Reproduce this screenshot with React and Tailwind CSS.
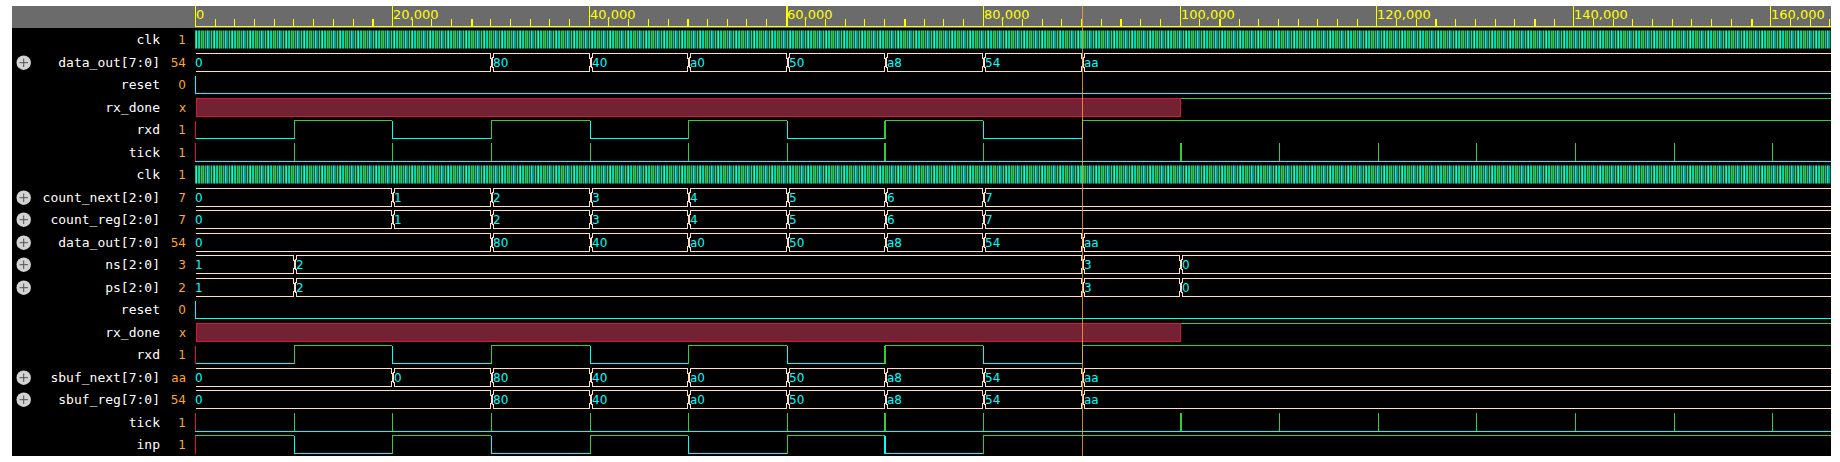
const X = [0, 99, 197, 296, 395, 493, 592, 690, 788, 887, 985, 1084, 1183, 1281, 1380, 1479, 1577];
const END = 4000;

const GREEN = '#32cd32';
const CYAN = '#00ffff';
const RED = '#dc143c';
const BUS = '#ffdfc0';

const THICK = [9, 14, 25, 30, 36, 47, 52, 63, 68, 79];
const CLOCK_COLORS = [
  '#22c860', '#00ffe8', '#064a3c', '#10c8a0', '#1fd890', '#06503c',
  '#28c850', '#209a3c', '#2fc850', '#0a5a38', '#1cc890', '#04584c',
  '#00f0d8', '#10a08c', '#109878', '#04503c', '#10e0a0', '#064838',
];

function Clock() {
  return (
    <>
      {Array.from({ length: 2000 }, (_, i) => (
        <rect key={i} x={i} y="0" width="1" height="19" fill={CLOCK_COLORS[i % 18]} />
      ))}
      <rect x="0" y="0" width={END} height="1" fill="#000000" fillOpacity="0.45" />
      <rect x="0" y="18" width={END} height="1" fill="#000000" fillOpacity="0.45" />
    </>
  );
}

function Bus({ values }) {
  return (
    <>
      {values.map(([at, text], i) => {
        const start = X[at];
        const last = i === values.length - 1;
        const end = last ? END : X[values[i + 1][0]];
        const left = i === 0 ? `M${start + 1} 0.5` : `M${start + 1.5} 9.5V4.5H${start + 2.5}V0.5`;
        const leftLow = i === 0 ? `M${start + 1} 18.5` : `M${start + 1.5} 9.5V14.5H${start + 2.5}V18.5`;
        const right = last ? `H${END}` : `H${end - 0.5}V5.5H${end + 0.5}V9.5`;
        const rightLow = last ? `H${END}` : `H${end - 0.5}V13.5H${end + 0.5}V9.5`;
        return (
          <g key={at}>
            <path d={left + right + leftLow + rightLow} fill="none" stroke={BUS} />
            <text x={i === 0 ? start : start + 2} y="14" fill={CYAN}>{text}</text>
          </g>
        );
      })}
    </>
  );
}

function Bit({ first, toggles, unknownStart }) {
  let level = first;
  const parts = [];
  const points = [0, ...toggles];
  points.forEach((at, i) => {
    const from = X[at];
    const to = i === points.length - 1 ? END : X[points[i + 1]];
    const color = level ? GREEN : CYAN;
    parts.push(<rect key={`h${i}`} x={from} y={level ? 0 : 18} width={to - from} height="1" fill={color} />);
    parts.push(<rect key={`v${i}`} x={at === 7 ? from - 1 : from} y="1" width={at === 7 ? 2 : 1} height="18" fill={i === 0 && unknownStart ? RED : color} />);
    level = !level;
  });
  return <>{parts}</>;
}

function Tick() {
  return (
    <>
      <rect x="0" y="18" width={END} height="1" fill={CYAN} />
      {X.map((x, i) => (
        i === 9 ? null : <rect key={x} x={i === 7 ? x - 1 : x} y="0" width={i === 7 || i === 10 ? 2 : 1} height="18" fill={i === 0 ? RED : GREEN} />
      ))}
    </>
  );
}

function Unknown() {
  return (
    <>
      <rect x="1.5" y="0.5" width="984" height="18" fill="#732233" stroke={RED} />
      <rect x="986" y="0" width={END} height="1" fill={GREEN} />
    </>
  );
}

const clock = <Clock />;
const tick = <Tick />;
const unknown = <Unknown />;
const reset = <Bit first={false} toggles={[]} />;
const rxd = <Bit first={false} toggles={[1, 2, 3, 4, 5, 6, 7, 8, 9]} unknownStart />;
const inp = <Bit first toggles={[1, 2, 3, 4, 5, 6, 7, 8]} unknownStart />;
const data = <Bus values={[[0, '0'], [3, '80'], [4, '40'], [5, 'a0'], [6, '50'], [7, 'a8'], [8, '54'], [9, 'aa']]} />;
const dataNext = <Bus values={[[0, '0'], [2, '0'], [3, '80'], [4, '40'], [5, 'a0'], [6, '50'], [7, 'a8'], [8, '54'], [9, 'aa']]} />;
const count = <Bus values={[[0, '0'], [2, '1'], [3, '2'], [4, '3'], [5, '4'], [6, '5'], [7, '6'], [8, '7']]} />;
const state = <Bus values={[[0, '1'], [1, '2'], [9, '3'], [10, '0']]} />;

const SIGNALS = [
  ['clk', '1', clock],
  ['data_out[7:0]', '54', data],
  ['reset', '0', reset],
  ['rx_done', 'x', unknown],
  ['rxd', '1', rxd],
  ['tick', '1', tick],
  ['clk', '1', clock],
  ['count_next[2:0]', '7', count],
  ['count_reg[2:0]', '7', count],
  ['data_out[7:0]', '54', data],
  ['ns[2:0]', '3', state],
  ['ps[2:0]', '2', state],
  ['reset', '0', reset],
  ['rx_done', 'x', unknown],
  ['rxd', '1', rxd],
  ['sbuf_next[7:0]', 'aa', dataNext],
  ['sbuf_reg[7:0]', '54', data],
  ['tick', '1', tick],
  ['inp', '1', inp],
];

function Ruler() {
  return (
    <div className="flex h-[22px] bg-[#6b6b6b] pl-[183px]">
      <svg className="h-full min-w-0 flex-1 text-[13px]" fill="#ffff00" shapeRendering="crispEdges">
        <rect x="0" y="20" width={END} height="1" />
        {Array.from({ length: 90 }, (_, i) => {
          const major = i % 10 === 0;
          return (
            <g key={i}>
              <rect x={Math.round(i * 19.69)} y={major ? 0 : 13} width={THICK.includes(i) ? 2 : 1} height={major ? 20 : 7} />
              {major && <text x={Math.round(i * 19.69) + 1} y="13">{(i * 2000).toLocaleString('en-US')}</text>}
            </g>
          );
        })}
      </svg>
    </div>
  );
}

function ExpandButton({ name }) {
  return (
    <button type="button" aria-label={`Expand ${name}`} className="ml-1 h-4 w-4 shrink-0">
      <svg viewBox="0 0 16 16" className="h-4 w-4">
        <circle cx="7.7" cy="7.7" r="7.2" fill="#d3d3d3" />
        <path d="M7.7 3.5V12M3.5 7.7H12" stroke="#505050" strokeWidth="1" />
      </svg>
    </button>
  );
}

export default function App() {
  return (
    <div className="bg-white py-[6px] pr-[9px] pl-3 font-['DejaVu_Sans',sans-serif] text-xs">
      <main className="relative overflow-hidden bg-black">
        <Ruler />
        <ul>
          {SIGNALS.map(([name, value, wave], i) => (
            <li key={i} className="flex items-start pt-[2px] odd:h-[23px] even:h-[22px]">
              <div className="flex h-5 w-[148px] shrink-0 items-center justify-between">
                {name.includes('[') ? <ExpandButton name={name} /> : <span />}
                <span className="font-['DejaVu_Sans_Mono',monospace] text-[13px] leading-5 text-white">{name}</span>
              </div>
              <span className="w-[26px] shrink-0 text-right leading-5 text-[#ffa62b]">{value}</span>
              <svg className="ml-[9px] h-[19px] min-w-0 flex-1" shapeRendering="crispEdges">{wave}</svg>
            </li>
          ))}
        </ul>
        <div className="absolute inset-y-0 left-[1070px] w-px bg-[#ffa62b] opacity-80" />
      </main>
    </div>
  );
}
